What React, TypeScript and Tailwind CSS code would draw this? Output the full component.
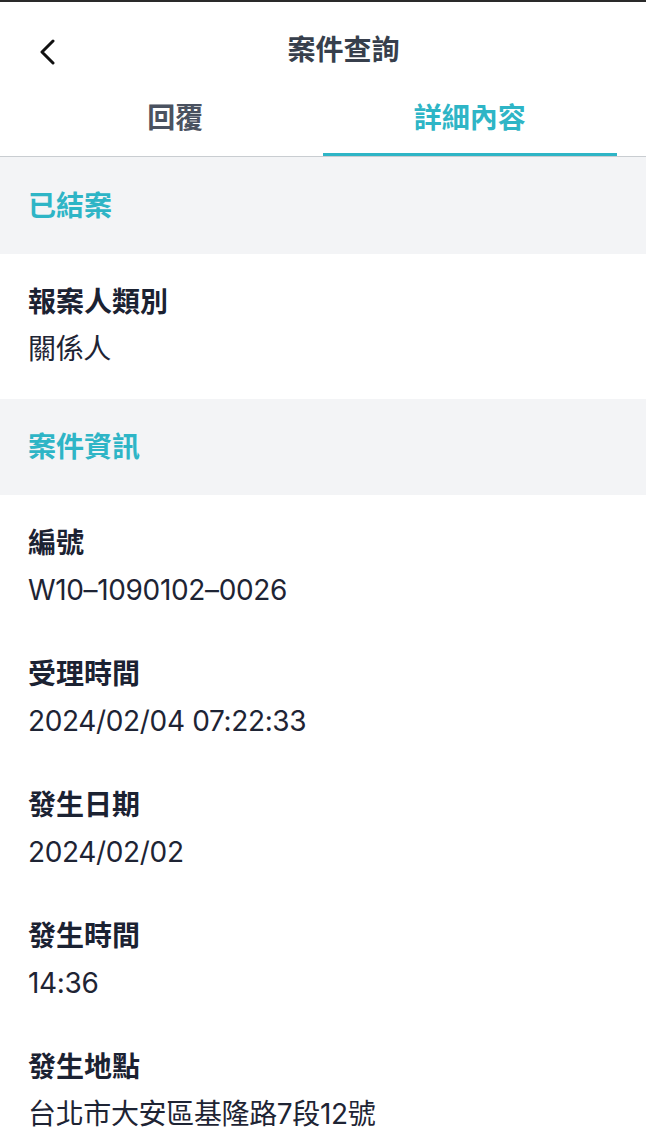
import React from "react";

const font = { fontFamily: '"Inter", "Noto Sans CJK TC", sans-serif' };

const sections: { title: string; items: { label: string; value: string }[] }[] = [
  {
    title: "已結案",
    items: [{ label: "報案人類別", value: "關係人" }],
  },
  {
    title: "案件資訊",
    items: [
      { label: "編號", value: "W10–1090102–0026" },
      { label: "受理時間", value: "2024/02/04 07:22:33" },
      { label: "發生日期", value: "2024/02/02" },
      { label: "發生時間", value: "14:36" },
      { label: "發生地點", value: "台北市大安區基隆路7段12號" },
    ],
  },
];

function BackIcon() {
  return (
    <svg width="20" height="26" viewBox="0 0 20 26" fill="none">
      <polyline
        points="15,2 4,13 15,24"
        stroke="#111"
        strokeWidth="3"
        strokeLinecap="round"
        strokeLinejoin="round"
      />
    </svg>
  );
}

export default function App() {
  return (
    <div className="min-h-screen bg-white" style={font}>
      <div className="h-[2px] bg-[#2a2a2a]" />

      {/* header */}
      <div className="relative flex h-[96px] items-center justify-center pl-[41px]">
        <button className="absolute left-[38px] top-[37px]">
          <BackIcon />
        </button>
        <h1 className="text-[28px] font-bold leading-[36px] text-[#373f4c]">案件查詢</h1>
      </div>

      {/* tabs */}
      <div className="flex border-b border-[#c9cdd1] pl-[28px] pr-[29px]">
        <div className="flex-1 border-b-[3px] border-transparent pt-[2px] pb-[17px] text-center text-[28px] font-bold leading-[36px] text-[#4a5260]">
          回覆
        </div>
        <div className="flex-1 border-b-[3px] border-[#2eb5c6] pt-[2px] pb-[17px] text-center text-[28px] font-bold leading-[36px] text-[#2eb5c6]">
          詳細內容
        </div>
      </div>

      {sections.map((s, i) => (
        <div key={s.title}>
          <div
            className={
              "flex items-center bg-[#f3f4f6] px-[28px] " + (i === 0 ? "h-[97px]" : "h-[96px]")
            }
          >
            <span className="text-[28px] font-semibold leading-[36px] text-[#2eb5c6]">{s.title}</span>
          </div>
          <div className="flex flex-col gap-[48px] px-[28px] pt-[30px] pb-[32px]">
            {s.items.map((it) => (
              <div key={it.label}>
                <div className="text-[28px] font-bold leading-[36px] text-[#1b2232]">{it.label}</div>
                <div className="mt-[11px] text-[28px] leading-[36px] tracking-[-0.35px] text-[#1e2434]">
                  {it.value}
                </div>
              </div>
            ))}
          </div>
        </div>
      ))}
    </div>
  );
}
